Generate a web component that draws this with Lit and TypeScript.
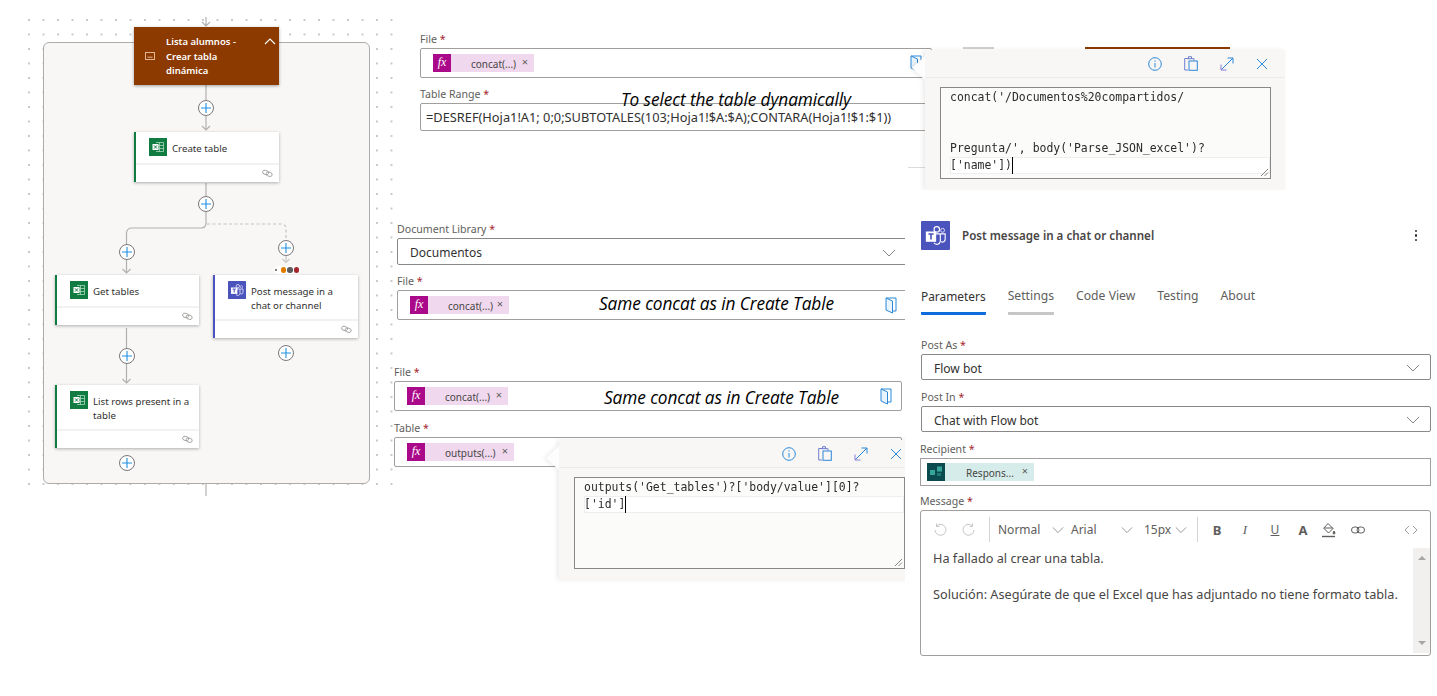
import { LitElement, html, css, svg } from 'lit'
import { customElement } from 'lit/decorators.js'

const chevron = html`<svg class="chev" viewBox="0 0 14 8" width="14" height="8"><path d="M1 1l6 6 6-6" fill="none" stroke="currentColor" stroke-width="1"/></svg>`

const fileIcon = html`<svg class="pick" viewBox="0 0 12 17" width="12" height="17" fill="none" stroke="#2b88d8" stroke-width="1">
  <path d="M1 1h10v13H7.5"/><path d="M1 1v12l6.5 3V4z" fill="#eaf4fc"/>
</svg>`

const infoIcon = html`<svg viewBox="0 0 14 14" width="14" height="14" fill="none" stroke="#2b88d8"><circle cx="7" cy="7" r="6.3"/><path d="M7 6v4.5M7 3.4v1.3"/></svg>`
const clipIcon = html`<svg viewBox="0 0 14 15" width="14" height="15" fill="none" stroke="#6f7fd0"><path d="M4 14H.7V2.5H4M4.5 3V.7h3V3"/><rect x="5" y="5" width="8.3" height="9.3" stroke="#2b88d8"/><path d="M3.5 2.7h6.5v2" /></svg>`
const expandIcon = html`<svg viewBox="0 0 14 14" width="14" height="14" fill="none" stroke="#2b88d8"><path d="M1 13L13 1M7.5 1H13v5.5"/><path d="M1 7.5V13h5.5" stroke="#8a7fd8"/></svg>`
const closeIcon = html`<svg viewBox="0 0 12 12" width="12" height="12" fill="none" stroke="#2b88d8"><path d="M1 1l10 10M11 1L1 11"/></svg>`

const excelTile = html`<svg class="tile" viewBox="0 0 18 18" width="18" height="18">
  <rect width="18" height="18" fill="#107c41"/>
  <path d="M7 4.5h7.5v9H7M7 7.5h7.5M7 10.5h7.5M10.5 4.5v9" fill="none" stroke="#a9d8bd" stroke-width=".8"/>
  <rect x="3.5" y="6" width="6" height="6" fill="#fff"/>
  <path d="M5 7.4l3 3.2M8 7.4l-3 3.2" stroke="#107c41" stroke-width="1"/>
</svg>`

const teamsTile = (size: number) => html`<svg class="tile" viewBox="0 0 18 18" width=${size} height=${size}>
  <rect width="18" height="18" rx=".6" fill="#4b53bc"/>
  <circle cx="9.8" cy="5.2" r="1.7" fill="none" stroke="#fff" stroke-width=".7"/>
  <circle cx="13.4" cy="5.8" r="1.2" fill="none" stroke="#dfe1f5" stroke-width=".6"/>
  <path d="M8 8h4v4.5a2.2 2.2 0 0 1-4 1M12.4 8h2.6v3.4a1.7 1.7 0 0 1-2.6 1.4" fill="none" stroke="#fff" stroke-width=".7"/>
  <rect x="3" y="6.5" width="6.4" height="6.4" fill="#fff"/>
  <path d="M4.6 8.1h3.2M6.2 8.1v3.4" stroke="#4b53bc" stroke-width="1"/>
</svg>`

const linkIcon = html`<svg class="link" viewBox="0 0 11 9" width="11" height="9" fill="none" stroke="#a19f9d" stroke-width=".9">
  <rect x=".6" y="1.5" width="6" height="4" rx="2" transform="rotate(18 3.6 3.5)"/>
  <rect x="4.2" y="3.2" width="6" height="4" rx="2" transform="rotate(18 7.2 5.2)"/>
</svg>`

// links of the flow, drawn in canvas coordinates
const wires = svg`
  <path d="M206 17v9M202 22l4 4 4-4M206 85v15M206 116v14M202 126l4 4 4-4M206 183v13M206 484v12"/>
  <path d="M206 212v11q0 5-5 5h-69q-5 0-5.500 5v11M126.500 260v13M122.500 269l4 4 4-4M126.500 328v20M126.500 364v19M122.500 379l4 4 4-4"/>
  <path d="M207 224h74q5 0 5 5v11" stroke-dasharray="3 2.500" stroke="#c4c2c0"/>
  <path d="M286 256v5M282.500 259l3.500 3.500 3.500-3.500" stroke="#c8c6c4"/>
`

const plusPoints = [
  [206, 108], [206, 204], [126.5, 252], [286, 248],
  [126.5, 356], [286, 353], [127, 463],
]

interface Node { x: number; y: number; w: number; title: string; tall?: boolean; teams?: boolean }

const nodes: Node[] = [
  { x: 134, y: 132, w: 145, title: 'Create table' },
  { x: 55, y: 275, w: 144, title: 'Get tables' },
  { x: 213, y: 275, w: 145, title: 'Post message in a chat or channel', tall: true, teams: true },
  { x: 55, y: 385, w: 144, title: 'List rows present in a table', tall: true },
]

const chip = (label: string, width: number) => html`
  <span class="chip" style="width:${width}px">
    <span class="fx">fx</span><span class="chip-text">${label}</span><span class="chip-x">×</span>
  </span>`

const field = (label: string, content: unknown, boxClass = 'box') => html`
  <div class="field">
    <div class="label">${label} <span class="req">*</span></div>
    <div class=${boxClass}>${content}</div>
  </div>`

const popover = (lines: string[], x: number, y: number) => html`
  <div class="pop" style="left:${x}px;top:${y}px">
    <div class="pop-head">${infoIcon}${clipIcon}${expandIcon}${closeIcon}</div>
    <div class="code">
      ${lines.map((l, i) => i === lines.length - 1
        ? html`<div class="ln cur"><span class="caret">${l}</span></div>`
        : html`<div class="ln">${l}</div>`)}
      <svg class="grip" viewBox="0 0 9 9" width="9" height="9" stroke="#8a8886" fill="none"><path d="M1 8l7-7M4.500 8L8 4.500"/></svg>
    </div>
  </div>`

@customElement('app-root')
export class AppRoot extends LitElement {
  static styles = css`
    :host {
      display: block;
      position: relative;
      width: 1437px;
      height: 696px;
      overflow: hidden;
      background: #fff;
      color: #323130;
      font-family: "Noto Sans", "Open Sans", sans-serif;
      font-size: 12px;
    }

    /* flow canvas */
    .grid {
      position: absolute; left: 28px; top: 19px; width: 365px; height: 468px;
      background-image: radial-gradient(circle at 1px 1px, #c6c6c6 .7px, transparent 1px);
      background-size: 14.5px 14.5px;
    }
    .group {
      position: absolute; left: 43px; top: 42px; width: 325px; height: 440px;
      background: #f8f7f6; border: 1px solid #aeacaa; border-radius: 6px;
    }
    .wires { position: absolute; left: 0; top: 0; fill: none; stroke: #b3b1af; stroke-width: 1.2; }
    .plus { position: absolute; width: 16px; height: 16px; margin: -8px 0 0 -8px; }
    .scope {
      position: absolute; left: 134px; top: 27px; width: 145px; height: 58px;
      display: flex; align-items: center; box-sizing: border-box; padding: 2px 0 0 11px; gap: 11px;
      background: #8c3a00; color: #fff; font-size: 9.500px; font-weight: 600; line-height: 14.400px;
      box-shadow: 0 1px 3px rgba(0,0,0,.35);
    }
    .scope-icon { margin-top: -2px; }
    .scope-name { width: 88px; }
    .scope-up { position: absolute; right: 3px; top: 11px; color: #fff; }
    .node {
      position: absolute; background: #fff; box-sizing: border-box;
      border-left: 2px solid #107c41; box-shadow: 0 1px 3px rgba(0,0,0,.3);
      display: flex; flex-direction: column;
    }
    .node.teams { border-left-color: #4b53bc; }
    .node-body { display: flex; gap: 5px; padding: 6px 6px 0 13px; height: 31px; box-sizing: border-box; }
    .node.tall .node-body { height: 44px; }
    .node-title { font-size: 9.700px; line-height: 14px; padding-top: 4px; color: #323130; }
    .node-foot {
      height: 17px; border-top: 2px solid #f3f2f1; display: flex; justify-content: flex-end;
      align-items: center; padding-right: 6px;
    }
    .tile { flex: none; display: block; }
    .dots { position: absolute; left: 274px; top: 266px; display: flex; gap: 1px; align-items: center; padding: 0 1px; background: #fff; border-radius: 5px; height: 8px; }
    .dots i { width: 5.500px; height: 5.500px; border-radius: 50%; display: block; }
    .dots i.tiny { width: 1.500px; height: 1.500px; background: #666; margin-right: 3px; }

    /* detail forms */
    .form { position: absolute; display: flex; flex-direction: column; gap: 10px; }
    .field { display: flex; flex-direction: column; }
    .label { height: 15px; line-height: 13px; font-size: 10.600px; color: #605e5c; white-space: nowrap; }
    .req { color: #a4262c; }
    .box, .select, .plain {
      border: 1px solid #a19f9d; border-radius: 2px; box-sizing: border-box;
      display: flex; align-items: center; background: #fff;
    }
    .box { height: 30px; padding: 0 9px 0 12px; justify-content: space-between; }
    .plain { height: 28px; padding-left: 5px; font-size: 12.800px; color: #323130; white-space: nowrap; overflow: hidden; }
    .select { height: 27px; padding: 2px 10px 0 12px; justify-content: space-between; font-size: 12px; border-color: #8a8886; }
    .chev { color: #8a8886; display: block; }
    .chip {
      display: flex; align-items: center; height: 18px; background: #f0d8ee; font-size: 10px;
      color: #484644; box-sizing: border-box; position: relative;
    }
    .fx {
      width: 18px; height: 18px; background: #aa0a8a; color: #fff; text-align: center;
      font: italic 12px/17px "Liberation Serif", serif;
    }
    .chip-text { margin-left: 20px; padding-top: 2px; white-space: nowrap; }
    .chip-x { position: absolute; right: 6px; top: 0; line-height: 16px; font-size: 11px; color: #605e5c; }
    .note {
      position: absolute; font-style: italic; font-size: 17.300px; color: #000; white-space: nowrap;
      font-family: "Open Sans", sans-serif; letter-spacing: -.1px; line-height: 20px;
    }
    .rest { height: 1px; width: 24px; background: #dcdcdc; align-self: flex-end; margin-top: 26px; }
    .strip { position: absolute; top: 47px; height: 2px; }

    /* expression popovers */
    .pop {
      position: absolute; width: 360px; height: 140px; background: #f8f7f6;
      filter: drop-shadow(-2px 0 2px rgba(0,0,0,.08));
    }
    .pop::before {
      content: ''; position: absolute; left: -13px; top: 6px; width: 13px; height: 24px;
      background: #fdfdfd; clip-path: polygon(100% 0, 0 50%, 100% 100%);
    }
    .pop-head {
      height: 27px; box-sizing: content-box; border-bottom: 1px solid #edebe9; display: flex; justify-content: flex-end;
      align-items: center; gap: 22px; padding-right: 17px;
    }
    .code {
      position: relative; margin: 9px 0 0 15px; width: 331px; height: 92px; box-sizing: border-box;
      border: 1px solid #8a8886; background: #fbfbfa; overflow: hidden; padding-top: 1px;
      font: 11.450px/17px "DejaVu Sans Mono", monospace; color: #2b2b2b;
    }
    .ln { height: 17px; padding-left: 9px; white-space: pre; }
    .ln.cur { box-shadow: inset 0 0 0 1px #efeeed; margin-left: 9px; padding-left: 0; background: #fff; }
    .caret { border-right: 1px solid #000; display: inline-block; height: 17px; }
    .grip { position: absolute; right: 1px; bottom: 1px; }

    /* action panel */
    .panel {
      position: absolute; left: 905px; top: 190px; width: 532px; height: 506px; background: #fff;
      box-sizing: border-box; padding: 31px 6px 0 16px;
    }
    .head { display: flex; align-items: center; gap: 12px; height: 29px; position: relative; }
    .head-title { font-size: 11.600px; font-weight: 600; color: #484644; flex: 1; }
    .more { display: flex; flex-direction: column; gap: 2px; margin-right: 14px; }
    .more i { width: 2.500px; height: 2.500px; border-radius: 50%; background: #323130; display: block; }
    .tabs { display: flex; gap: 22px; margin-top: 37px; font-size: 12.200px; color: #605e5c; }
    .tab { padding-bottom: 7px; border-bottom: 3px solid transparent; border-radius: 1px; line-height: 18px; }
    .tab.on { color: #323130; font-size: 11.900px; border-bottom-color: #0f6cdd; }
    .tab.seen { border-bottom-color: #c8c6c4; }
    .fields { display: flex; flex-direction: column; gap: 11px; margin-top: 24px; }
    .fields .select { height: 26px; }
    .wide { margin-left: -1px; }
    .wide.msg-field { margin-top: -2px; }
    .recipient { height: 28px; border: 1px solid #a19f9d; box-sizing: border-box; padding-left: 6px; display: flex; align-items: center; }
    .chip.resp { background: #d6ecea; }
    .rtile { display: block; flex: none; }
    .resp .chip-text { margin-left: 21px; }
    .editor { height: 146px; border: 1px solid #a19f9d; border-radius: 3px; box-sizing: border-box; display: flex; flex-direction: column; }
    .bar { height: 37px; flex: none; display: flex; align-items: center; position: relative; padding-left: 12px; color: #605e5c; font-size: 12px; }
    .bar > * { flex: none; }
    .sep { width: 1px; height: 25px; background: #d6d4d2; }
    .drop { display: flex; align-items: center; justify-content: space-between; }
    .drop .chev { width: 12px; }
    .tool { width: 28px; text-align: center; font-size: 13px; line-height: 16px; }
    .tool.b { font-weight: 700; }
    .tool.i { font-family: "Liberation Serif", serif; font-style: italic; }
    .tool.u { text-decoration: underline; font-size: 12px; }
    .tool.a { font-weight: 700; }
    .edit-main { flex: 1; display: flex; min-height: 0; }
    .msg { flex: 1; padding: 1px 0 0 12px; font-size: 12.700px; line-height: 18px; color: #484644; white-space: nowrap; }
    .msg p { margin: 0 0 18px; }
    .scroll { width: 17px; background: #f1f0ef; display: flex; flex-direction: column; justify-content: space-between; align-items: center; padding: 8px 0; box-sizing: border-box; margin-bottom: 2px; }
    .scroll i { width: 0; height: 0; border-left: 4px solid transparent; border-right: 4px solid transparent; display: block; }
    .scroll i.up { border-bottom: 4px solid #a6a6a6; }
    .scroll i.down { border-top: 4px solid #a6a6a6; }
  `

  private renderFlow() {
    return html`
      <div class="grid"></div>
      <div class="group"></div>
      <svg class="wires" width="400" height="500">${wires}</svg>
      <div class="scope">
        <svg class="scope-icon" viewBox="0 0 10 8" width="10" height="8" fill="none" stroke="#e2b592"><rect x=".5" y=".5" width="9" height="7"/><path d="M2.500 5.200h5" /></svg>
        <span class="scope-name">Lista alumnos - Crear tabla dinámica</span>
        <svg class="scope-up" viewBox="0 0 12 7" width="12" height="7" fill="none" stroke="currentColor" stroke-width="1.100"><path d="M1 6l5-5 5 5"/></svg>
      </div>
      ${plusPoints.map(([x, y]) => html`
        <svg class="plus" style="left:${x}px;top:${y}px" viewBox="0 0 16 16">
          <circle cx="8" cy="8" r="7.500" fill="#fff" stroke="#79777a"/>
          <path d="M3 8h10M8 3v10" stroke="#1f8fe0" stroke-width="1.100"/>
        </svg>`)}
      ${nodes.map(n => html`
        <div class="node ${n.tall ? 'tall' : ''} ${n.teams ? 'teams' : ''}" style="left:${n.x}px;top:${n.y}px;width:${n.w}px">
          <div class="node-body">
            ${n.teams ? teamsTile(18) : excelTile}
            <span class="node-title">${n.title}</span>
          </div>
          <div class="node-foot">${linkIcon}</div>
        </div>`)}
      <div class="dots">
        <i class="tiny"></i>
        <i style="background:#e07b00"></i><i style="background:#5c5c5c"></i><i style="background:#a4262c"></i>
      </div>
    `
  }

  private renderForms() {
    return html`
      <div class="form" style="left:420px;top:33px;width:512px">
        ${field('File', html`${chip('concat(...)', 101)}${fileIcon}`)}
        ${field('Table Range', '=DESREF(Hoja1!A1; 0;0;SUBTOTALES(103;Hoja1!$A:$A);CONTARA(Hoja1!$1:$1))', 'plain')}
        <div class="rest"></div>
      </div>
      <div class="strip" style="left:1085px;width:145px;background:#8c3a00"></div>
      <div class="strip" style="left:963px;width:31px;background:#d2d0ce"></div>
      <div class="note" style="left:621px;top:90px">To select the table dynamically</div>

      <div class="form" style="left:397px;top:223px;width:510px">
        ${field('Document Library', html`Documentos${chevron}`, 'select')}
        ${field('File', html`${chip('concat(...)', 99)}${fileIcon}`)}
      </div>
      <div class="note" style="left:599px;top:294px">Same concat as in Create Table</div>

      <div class="form" style="left:394px;top:366px;width:508px;gap:11px">
        ${field('File', html`${chip('concat(...)', 101)}${fileIcon}`)}
        ${field('Table', html`${chip('outputs(...)', 107)}`)}
      </div>
      <div class="note" style="left:604px;top:388px">Same concat as in Create Table</div>

      ${popover(["concat('/Documentos%20compartidos/", '', '', "Pregunta/', body('Parse_JSON_excel')?", "['name'])"], 925, 50)}
      ${popover(["outputs('Get_tables')?['body/value'][0]?", "['id']"], 559, 440)}
    `
  }

  private renderEditor() {
    return html`
      <div class="editor">
        <div class="bar">
          <svg viewBox="0 0 14 14" width="14" height="14" fill="none" stroke="#c8c6c4"><path d="M3.500 3a5.500 5.500 0 1 1-1.500 4M3.500 .5V3.500H6.500"/></svg>
          <svg style="margin-left:15px" viewBox="0 0 14 14" width="14" height="14" fill="none" stroke="#c8c6c4"><path d="M10.500 3a5.500 5.500 0 1 0 1.500 4M10.500 .5V3.500H7.500"/></svg>
          <span class="sep" style="margin-left:13px"></span>
          <span class="drop" style="margin-left:8px;width:66px">Normal ${chevron}</span>
          <span class="drop" style="margin-left:7px;width:62px">Arial ${chevron}</span>
          <span class="drop" style="margin-left:11px;width:43px">15px ${chevron}</span>
          <span class="sep" style="margin-left:10px"></span>
          <span class="tool b" style="margin-left:5px">B</span>
          <span class="tool i">I</span>
          <span class="tool u" style="margin-left:2px">U</span>
          <span class="tool a">A</span>
          <svg style="margin-left:4px" viewBox="0 0 15 16" width="15" height="16" fill="none" stroke="#605e5c"><path d="M7 1.500l5 5-4.500 4.500-4.800-4.800zM3 6h9"/><path d="M13 9l1 2a1 1 0 0 1-2 0z" fill="#605e5c"/><path d="M1 14.500h13" stroke-width="1.400"/></svg>
          <svg style="margin-left:15px" viewBox="0 0 14 8" width="14" height="8" fill="none" stroke="#605e5c"><rect x=".5" y="1" width="7.500" height="6" rx="3"/><rect x="6" y="1" width="7.500" height="6" rx="3"/></svg>
          <svg style="margin-left:39px" viewBox="0 0 14 10" width="14" height="10" fill="none" stroke="#a19f9d"><path d="M5 1L1 5l4 4M9 1l4 4-4 4"/></svg>
        </div>
        <div class="edit-main">
          <div class="msg">
            <p>Ha fallado al crear una tabla.</p>
            <p>Solución: Asegúrate de que el Excel que has adjuntado no tiene formato tabla.</p>
          </div>
          <div class="scroll"><i class="up"></i><i class="down"></i></div>
        </div>
      </div>
    `
  }

  private renderPanel() {
    const respChip = html`
      <span class="chip resp" style="width:107px">
        <svg class="rtile" viewBox="0 0 18 18" width="18" height="18">
          <rect width="18" height="18" fill="#0b4a4f"/>
          <rect x="10" y="3.500" width="5" height="5" fill="#37a699"/>
          <rect x="3" y="7" width="5" height="5" fill="#37a699"/>
          <rect x="10" y="10" width="4" height="3" fill="#1b7a75"/>
        </svg>
        <span class="chip-text">Respons...</span><span class="chip-x">×</span>
      </span>`
    return html`
      <div class="panel">
        <div class="head">
          ${teamsTile(29)}
          <span class="head-title">Post message in a chat or channel</span>
          <span class="more"><i></i><i></i><i></i></span>
        </div>
        <div class="tabs">
          <span class="tab on">Parameters</span>
          <span class="tab seen">Settings</span>
          <span class="tab">Code View</span>
          <span class="tab">Testing</span>
          <span class="tab">About</span>
        </div>
        <div class="fields">
          ${field('Post As', html`Flow bot${chevron}`, 'select')}
          ${field('Post In', html`Chat with Flow bot${chevron}`, 'select')}
          <div class="wide">${field('Recipient', respChip, 'recipient')}</div>
          <div class="wide msg-field">${field('Message', this.renderEditor(), 'editor-wrap')}</div>
        </div>
      </div>
    `
  }

  render() {
    return html`${this.renderFlow()}${this.renderForms()}${this.renderPanel()}`
  }
}
